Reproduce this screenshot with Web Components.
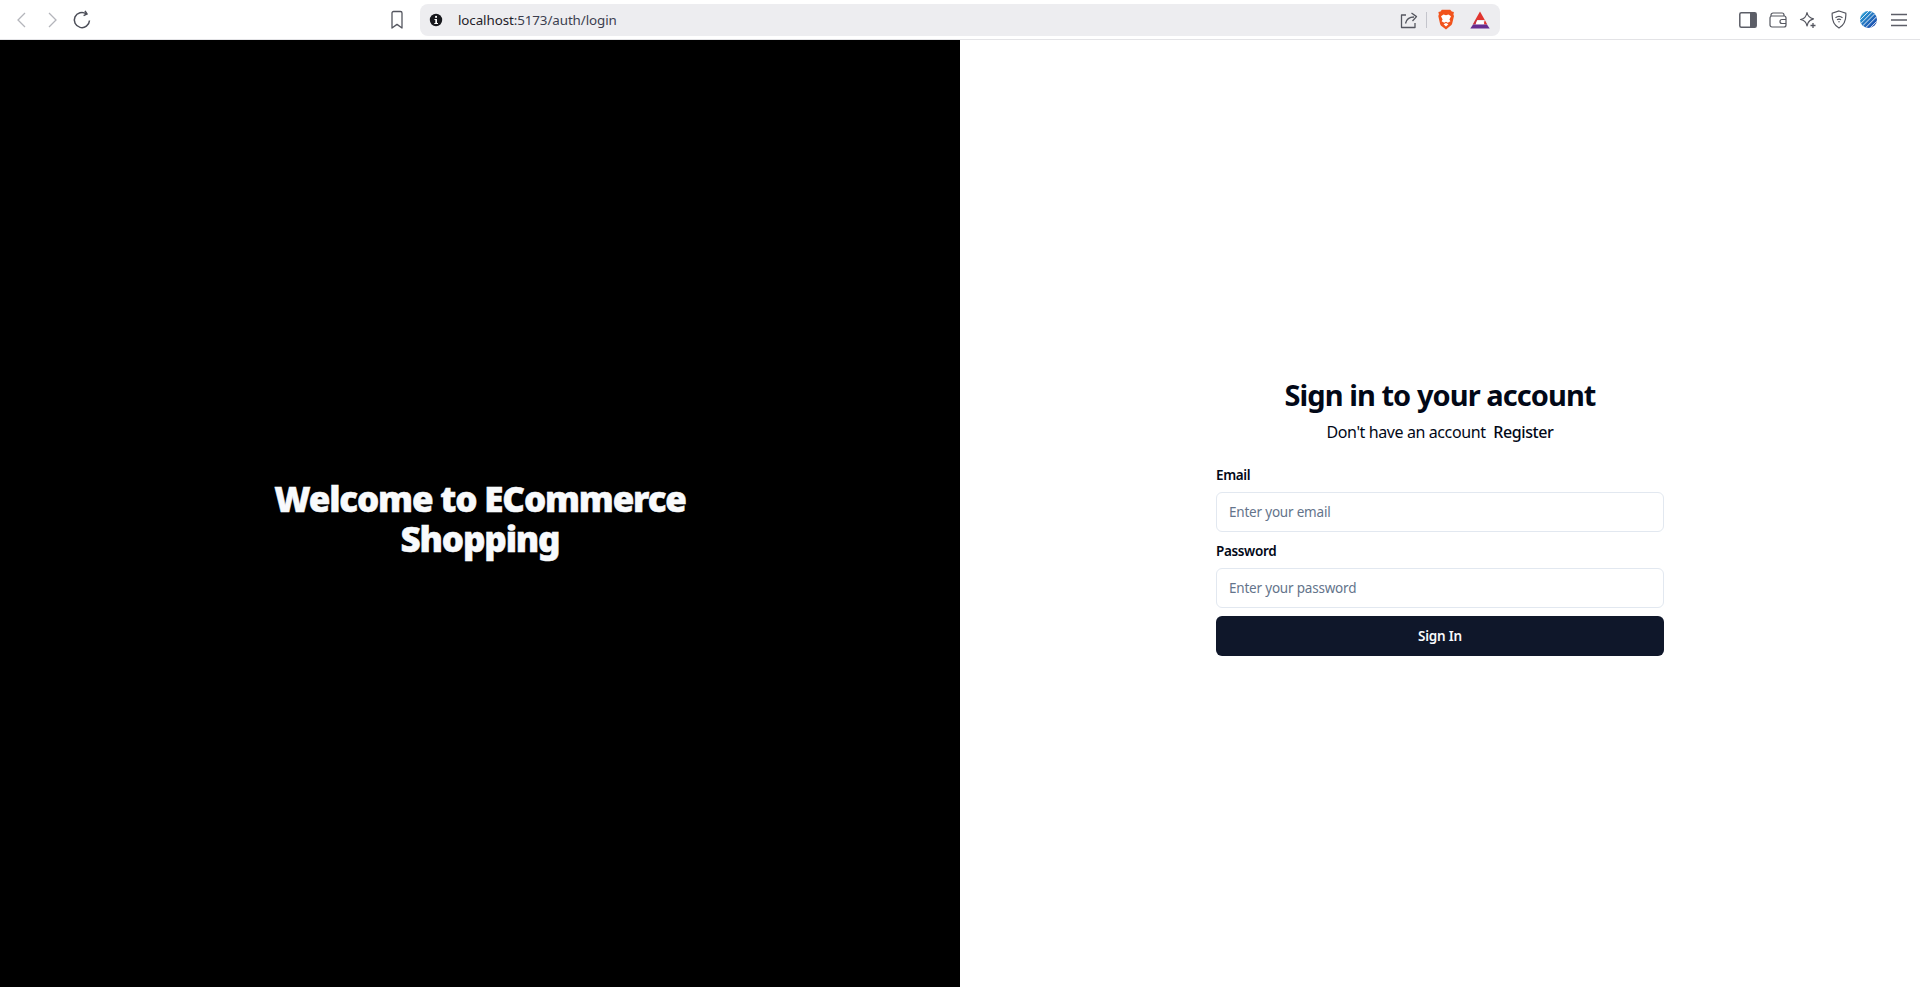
<!DOCTYPE html>
<html lang="en">
<head>
<meta charset="utf-8">
<title>Login</title>
<style>
    html, body { margin: 0; height: 100%; overflow: hidden; background: #fff; }
    body { font-family: "Noto Sans", "Open Sans", sans-serif; }
</style>
</head>
<body>
<browser-bar url-host="localhost" url-path=":5173/auth/login"></browser-bar>
<auth-layout>
    <welcome-panel slot="side">Welcome to ECommerce Shopping</welcome-panel>
    <login-form slot="main"></login-form>
</auth-layout>

<script>
class BrowserBar extends HTMLElement {
    connectedCallback() {
        const host = this.getAttribute('url-host');
        const path = this.getAttribute('url-path');
        this.attachShadow({ mode: 'open' });
        this.shadowRoot.innerHTML = `
            <style>
                :host {
                    display: flex;
                    align-items: center;
                    height: 39px;
                    border-bottom: 1px solid #e3e3e6;
                    background: #fff;
                    box-sizing: content-box;
                }
                svg { display: block; flex: none; }
                .btn { display: flex; align-items: center; justify-content: center; width: 30px; height: 30px; flex: none; }
                .nav { display: flex; margin-left: 7px; }
                .bookmark { margin-left: 285px; }
                .pill {
                    display: flex;
                    align-items: center;
                    width: 1080px;
                    height: 32px;
                    margin-left: 8px;
                    border-radius: 8px;
                    background: #ededf0;
                    box-sizing: border-box;
                    padding: 0 7px 0 9px;
                }
                .url { margin-left: 15px; font: 13.4px "Noto Sans", sans-serif; color: #3b3e4f; letter-spacing: -.1px; flex: 1; }
                .url b { font-weight: 400; color: #1f2128; }
                .sep { width: 1px; height: 16px; background: #c4c5cc; margin: 0 6px 0 4px; }
                .pill .btn { width: 26px; }
                .bat { margin-left: 8px; }
                .tools { display: flex; margin-left: 233px; }
                .tools .btn { width: 30.2px; }
            </style>
            <div class="nav">
                <span class="btn"><svg width="16" height="18" viewBox="0 0 16 18" fill="none" stroke="#b4b5bb" stroke-width="1.3"><path d="M11 2 4 9l7 7"/></svg></span>
                <span class="btn"><svg width="16" height="18" viewBox="0 0 16 18" fill="none" stroke="#b4b5bb" stroke-width="1.3"><path d="m5 2 7 7-7 7"/></svg></span>
                <span class="btn"><svg width="20" height="20" viewBox="0 0 20 20" fill="none" stroke="#4c4e58" stroke-width="1.5"><path d="M17.500 10.500A7.600 7.600 0 1 1 14.300 3.800"/><path d="M13 .8 15 4l-3.400 1.700"/></svg></span>
            </div>
            <span class="btn bookmark"><svg width="14" height="20" viewBox="0 0 14 20" fill="none" stroke="#54565f" stroke-width="1.3" stroke-linejoin="round"><path d="M2 3a1.5 1.5 0 0 1 1.5-1.500h7A1.500 1.500 0 0 1 12 3v15l-5-3.600L2 18z"/></svg></span>
            <div class="pill">
                <svg width="14" height="14" viewBox="0 0 14 14"><circle cx="7" cy="7" r="6.200" fill="#17181d"/><rect x="6.100" y="2.900" width="1.900" height="1.900" fill="#fff"/><path d="M5.500 6h2.500v4H9v1H5.300v-1h1V7H5.500z" fill="#fff"/></svg>
                <span class="url"><b>${host}</b>${path}</span>
                <span class="btn"><svg width="20" height="20" viewBox="0 0 20 20" fill="none" stroke="#54565f" stroke-width="1.300" stroke-linejoin="round"><path d="M7 5H2.500v12.500H16V13"/><path d="M6.500 13.500C7.500 9 10.500 7 15 7"/><path d="M12.500 3 17.500 6.600 13.500 11"/></svg></span>
                <span class="sep"></span>
                <span class="btn"><svg width="18" height="21" viewBox="0 0 18 21"><path d="M4.800.7h8.400l1.600 1.900 2.100.3-.5 2.600.6 1.600-1.800 7.300c-.3 1.200-1 1.900-2 2.600L9 20.400l-3.900-2.900c-1-.7-1.700-1.400-2-2.600L1.300 7.100l.6-1.600-.5-2.600 2.100-.3z" fill="#f1531c"/><path d="M4 7.300 6.500 5.600 9 6.300l2.500-.7L14 7.300l-1.600 3.300 1 1.600-2.600 1.600L9 12.700l-1.800 1.100-2.600-1.600 1-1.600z" fill="#fff"/><path d="M6.600 15.200 9 14l2.400 1.200L9 17.400z" fill="#fff"/></svg></span>
                <span class="btn bat"><svg width="20" height="18" viewBox="0 0 20 18"><path d="M10 .5 14.800 9H5.200z" fill="#e1352f"/><path d="M5.200 9h2l-1.500 4.500H2.700z" fill="#c8303c"/><path d="M14.800 9 17.300 13.500H13.500z" fill="#e1352f"/><path d="M7 10h6l1.500 3.500h-9z" fill="#fff"/><path d="M.3 17.500 3 13.500h14l2.700 4z" fill="#662d91"/></svg></span>
            </div>
            <div class="tools">
                <span class="btn"><svg width="18" height="16" viewBox="0 0 18 16"><rect x=".8" y=".8" width="16.400" height="14.400" rx="1.500" fill="#fff" stroke="#5c5e67" stroke-width="1.500"/><rect x="11" y="1" width="6" height="14" fill="#5c5e67"/></svg></span>
                <span class="btn"><svg width="18" height="16" viewBox="0 0 18 16" fill="none" stroke="#54565f" stroke-width="1.200"><path d="M2 4V3a2 2 0 0 1 2-2h9a2 2 0 0 1 2 2v1"/><rect x="1" y="4" width="16" height="11" rx="2"/><path d="M17 7.500h-4a2 2 0 0 0 0 4h4"/></svg></span>
                <span class="btn"><svg width="18" height="18" viewBox="0 0 18 18" fill="none" stroke="#54565f" stroke-width="1.200" stroke-linejoin="round"><path d="M8 1.500c.7 3.700 2.500 5.500 6.500 6.300-2.700.7-4.500 1.800-5.500 4.200l-1 3c-.6-3.900-2.500-5.900-6.500-6.500C5.500 7.800 7.400 5.500 8 1.500z"/><path d="M14 12v5M11.500 14.500h5" stroke-width="1.300"/></svg></span>
                <span class="btn"><svg width="16" height="19" viewBox="0 0 16 19" fill="none" stroke="#54565f" stroke-width="1.200"><path d="M8 1 14.800 3.200c.4 6 -.4 11.300-6.800 14.800C1.600 14.500.8 9.200 1.200 3.200z"/><path d="M4.500 7.800c2-1.700 5-1.700 7 0M6 9.800c1.200-.9 2.800-.9 4 0"/><circle cx="8" cy="11.800" r=".7" fill="#54565f" stroke="none"/></svg></span>
                <span class="btn"><svg width="17" height="17" viewBox="0 0 16 16"><defs><clipPath id="g"><circle cx="8" cy="8" r="8"/></clipPath><linearGradient id="gb" x1="0" y1="0" x2="1" y2="1"><stop offset="0" stop-color="#2aa7d8"/><stop offset="1" stop-color="#1a3fa8"/></linearGradient></defs><circle cx="8" cy="8" r="8" fill="url(#gb)"/><g clip-path="url(#g)" stroke="#fff" stroke-width=".8"><path d="M-1 6 6-1M-1 9.500 9.500-1M0 12.500 12.500 0M2.500 14 14 2.500M5 16 16 5M8.500 17 17 8.500"/></g></svg></span>
                <span class="btn"><svg width="16" height="14" viewBox="0 0 16 14" fill="none" stroke="#5c5e67" stroke-width="1.300"><path d="M0 1.500h16M0 7h16M0 12.500h16"/></svg></span>
            </div>
        `;
    }
}

class AuthLayout extends HTMLElement {
    connectedCallback() {
        this.attachShadow({ mode: 'open' });
        this.shadowRoot.innerHTML = `
            <style>
                :host {
                    display: grid;
                    grid-template-columns: 960px 960px;
                    height: 958px;
                }
                .side { display: flex; align-items: center; justify-content: center; background: #000; }
                .main { display: flex; align-items: center; justify-content: center; background: #fff; padding-bottom: 6px; }
            </style>
            <div class="side"><slot name="side"></slot></div>
            <div class="main"><slot name="main"></slot></div>
        `;
    }
}

class WelcomePanel extends HTMLElement {
    connectedCallback() {
        this.attachShadow({ mode: 'open' });
        this.shadowRoot.innerHTML = `
            <style>
                :host { display: block; width: 448px; text-align: center; }
                h1 {
                    margin: 0;
                    font: 900 35px/40px "Noto Sans", sans-serif;
                    letter-spacing: -1.17px;
                    -webkit-text-stroke: .5px #f8fafc;
                    color: #f8fafc;
                }
            </style>
            <h1><slot></slot></h1>
        `;
    }
}

class FormField extends HTMLElement {
    connectedCallback() {
        this.attachShadow({ mode: 'open' });
        this.shadowRoot.innerHTML = `
            <style>
                :host { display: block; }
                label {
                    display: block;
                    padding-top: 1px;
                    margin-bottom: 7px;
                    font: 600 13.5px/20px "Noto Sans", sans-serif;
                    letter-spacing: -.35px;
                    color: #020817;
                }
                input {
                    display: block;
                    width: 100%;
                    height: 40px;
                    box-sizing: border-box;
                    padding: 0 12px;
                    border: 1px solid #e2e8f0;
                    border-radius: 6px;
                    background: #fff;
                    font: 13.5px "Noto Sans", sans-serif;
                    letter-spacing: -.2px;
                    outline: none;
                }
                input::placeholder { color: #64748b; opacity: 1; }
            </style>
            <label>${this.getAttribute('label')}</label>
            <input type="${this.getAttribute('type')}" placeholder="${this.getAttribute('placeholder')}">
        `;
    }
}

class LoginForm extends HTMLElement {
    connectedCallback() {
        this.attachShadow({ mode: 'open' });
        this.shadowRoot.innerHTML = `
            <style>
                :host { display: block; width: 448px; color: #020817; }
                .head { text-align: center; margin-bottom: 20px; }
                h2 {
                    margin: 0;
                    font: 700 29px/36px "Noto Sans", sans-serif;
                    letter-spacing: -.93px;
                }
                p { margin: 7px 0 0; font: 16px/24px "Noto Sans", sans-serif; letter-spacing: -.4px; }
                a { margin-left: 4px; font-weight: 500; color: #020817; text-decoration: none; }
                form { display: grid; gap: 8px; }
                button {
                    height: 40px;
                    border: 0;
                    border-radius: 6px;
                    background: #0f172a;
                    color: #f8fafc;
                    font: 600 13.5px "Noto Sans", sans-serif;
                    letter-spacing: -.2px;
                }
            </style>
            <div class="head">
                <h2>Sign in to your account</h2>
                <p>Don't have an account <a href="#">Register</a></p>
            </div>
            <form>
                <form-field label="Email" type="email" placeholder="Enter your email"></form-field>
                <form-field label="Password" type="password" placeholder="Enter your password"></form-field>
                <button type="button">Sign In</button>
            </form>
        `;
    }
}

customElements.define('browser-bar', BrowserBar);
customElements.define('auth-layout', AuthLayout);
customElements.define('welcome-panel', WelcomePanel);
customElements.define('form-field', FormField);
customElements.define('login-form', LoginForm);
</script>
</body>
</html>
